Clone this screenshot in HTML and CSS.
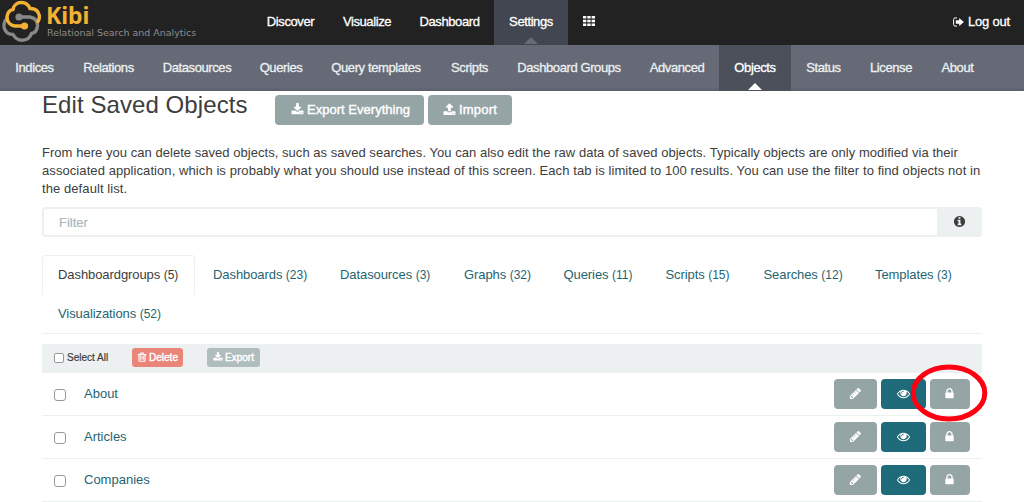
FILE: index.html
```html
<!DOCTYPE html>
<html lang="en">
<head>
<meta charset="utf-8">
<title>Kibi - Settings</title>
<link rel="stylesheet" href="styles.css">
</head>
<body>
<svg class="sprite" aria-hidden="true">
  <symbol id="download" viewBox="0 0 1792 1792"><path d="M1344 1344q0-26-19-45t-45-19-45 19-19 45 19 45 45 19 45-19 19-45zm256 0q0-26-19-45t-45-19-45 19-19 45 19 45 45 19 45-19 19-45zm128-224v320q0 40-28 68t-68 28h-1472q-40 0-68-28t-28-68v-320q0-40 28-68t68-28h465l135 136q58 56 136 56t136-56l136-136h464q40 0 68 28t28 68zm-325-569q17 41-14 70l-448 448q-18 19-45 19t-45-19l-448-448q-31-29-14-70 17-39 59-39h256v-448q0-26 19-45t45-19h256q26 0 45 19t19 45v448h256q42 0 59 39z"/></symbol>
  <symbol id="upload" viewBox="0 0 1792 1792"><path d="M1344 1472q0-26-19-45t-45-19-45 19-19 45 19 45 45 19 45-19 19-45zm256 0q0-26-19-45t-45-19-45 19-19 45 19 45 45 19 45-19 19-45zm128-224v320q0 40-28 68t-68 28h-1472q-40 0-68-28t-28-68v-320q0-40 28-68t68-28h427q21 56 70.5 92t110.5 36h256q61 0 110.5-36t70.5-92h427q40 0 68 28t28 68zm-325-648q-17 40-59 40h-256v448q0 26-19 45t-45 19h-256q-26 0-45-19t-19-45v-448h-256q-42 0-59-40-17-39 14-69l448-448q18-19 45-19t45 19l448 448q31 30 14 69z"/></symbol>
  <symbol id="lock" viewBox="0 0 1792 1792"><path d="M640 768h512v-192q0-106-75-181t-181-75-181 75-75 181v192zm832 96v576q0 40-28 68t-68 28h-960q-40 0-68-28t-28-68v-576q0-40 28-68t68-28h32v-192q0-184 132-316t316-132 316 132 132 316v192h32q40 0 68 28t28 68z"/></symbol>
  <symbol id="pencil" viewBox="0 0 1792 1792"><path d="M491 1536l91-91-235-235-91 91v107h128v128h107zm523-928q0-22-22-22-10 0-17 7l-542 542q-7 7-7 17 0 22 22 22 10 0 17-7l542-542q7-7 7-17zm-54-192l416 416-832 832h-416v-416zm683 96q0 53-37 90l-166 166-416-416 166-165q36-38 90-38 53 0 91 38l235 234q37 39 37 91z"/></symbol>
  <symbol id="eye" viewBox="0 0 1792 1792"><path d="M1664 960q-152-236-381-353 61 104 61 225 0 185-131.5 316.5t-316.5 131.5-316.5-131.5-131.5-316.5q0-121 61-225-229 117-381 353 133 205 333.5 326.5t434.5 121.5 434.5-121.5 333.500-326.500zm-720-384q0-20-14-34t-34-14q-125 0-214.500 89.500t-89.500 214.500q0 20 14 34t34 14 34-14 14-34q0-86 61-147t147-61q20 0 34-14t14-34zm848 384q0 34-20 69-140 230-376.500 368.500t-499.500 138.500-499.500-139-376.500-368q-20-35-20-69t20-69q140-229 376.500-368t499.500-139 499.500 139 376.500 368q20 35 20 69z"/></symbol>
  <symbol id="info" viewBox="0 0 1792 1792"><path d="M1152 1376v-160q0-14-9-23t-23-9h-96v-512q0-14-9-23t-23-9h-320q-14 0-23 9t-9 23v160q0 14 9 23t23 9h96v320h-96q-14 0-23 9t-9 23v160q0 14 9 23t23 9h448q14 0 23-9t9-23zm-128-896v-160q0-14-9-23t-23-9h-192q-14 0-23 9t-9 23v160q0 14 9 23t23 9h192q14 0 23-9t9-23zm640 416q0 209-103 385.5t-279.5 279.5-385.5 103-385.5-103-279.5-279.5-103-385.5 103-385.5 279.5-279.5 385.5-103 385.5 103 279.5 279.5 103 385.5z"/></symbol>
  <symbol id="trash" viewBox="0 0 14 14"><path fill-rule="evenodd" d="M4.600 .8h4.800l.8 1.900H13v1.700h-1V12q0 1.700-1.500 1.700h-7Q2 13.700 2 12V4.400H1V2.700h2.800zM5.800 2l-.3.700h3l-.3-.7zM3.600 4.600v7.500h6.800V4.600zM4.500 5.500h1.200v5.500H4.500zM6.400 5.500h1.200v5.500H6.400zM8.300 5.500h1.200v5.500H8.300z"/></symbol>
  <symbol id="signout" viewBox="0 0 11 10"><path d="M4 .9H2.200Q.6.900.6 2.500v5Q.6 9.100 2.200 9.100H4" fill="none" stroke="currentColor"/><path d="M2.800 3.300h3.400V.9L10.900 5 6.200 9.100V6.700H2.800z"/></symbol>
  <symbol id="grid" viewBox="0 0 12 10"><path d="M0 0h3.300v2.600H0zM4.300 0h3.300v2.600H4.300zM8.600 0H12v2.600H8.600zM0 3.700h3.300v2.600H0zM4.300 3.700h3.300v2.600H4.300zM8.600 3.700H12v2.600H8.600zM0 7.400h3.300V10H0zM4.300 7.400h3.300V10H4.300zM8.600 7.400H12V10H8.600z"/></symbol>
</svg>

<header class="topbar">
  <div class="brand">
    <svg class="logo" viewBox="0 0 40 43" fill="none" stroke-width="3.400" stroke-linecap="round">
      <path stroke="#888" d="M18 17H29C34 18 37 21 36.500 26C36 30 34 33 30.500 33.500C29 38 26 40.200 21 40.200C17 40.200 14 38 12 34.500C7.500 34.500 4 32 3 27C2.700 23 3.600 20.500 6 18.500"/>
      <path stroke="#f2b233" d="M23 26H14C9 25.500 6 22 6 17C6.500 13 8.500 10 12 9.500C12.500 5.500 16 2.500 20.500 2.500C25 2.500 27.500 5 29 8.500C34 8.500 37.500 11 38.300 15.500C38.500 18 38 20 37 21.500"/>
      <circle cx="18" cy="17" r="3.600" fill="#888" stroke="none"/>
      <circle cx="23.500" cy="26" r="3.600" fill="#f2b233" stroke="none"/>
    </svg>
    <div class="brand-text"><div class="brand-name">Kibi</div><div class="brand-tag">Relational Search and Analytics</div></div>
  </div>
  <nav class="mainnav">
    <a>Discover</a><a>Visualize</a><a>Dashboard</a><a class="current">Settings</a><a><svg class="icon-grid"><use href="#grid"/></svg></a>
  </nav>
  <a class="logout"><svg class="icon-out"><use href="#signout"/></svg>Log out</a>
</header>

<nav class="subnav">
  <a>Indices</a><a>Relations</a><a>Datasources</a><a>Queries</a><a>Query templates</a><a>Scripts</a><a>Dashboard Groups</a><a>Advanced</a><a class="current">Objects</a><a>Status</a><a>License</a><a>About</a>
</nav>

<main class="content">
  <div class="heading">
    <h1>Edit Saved Objects</h1>
    <button class="btn btn-everything"><svg class="icon"><use href="#download"/></svg>Export Everything</button>
    <button class="btn btn-import"><svg class="icon"><use href="#upload"/></svg>Import</button>
  </div>
  <p class="intro"><span class="l1">From here you can delete saved objects, such as saved searches. You can also edit the raw data of saved objects. Typically objects are only modified via their</span><br><span class="l2">associated application, which is probably what you should use instead of this screen. Each tab is limited to 100 results. You can use the filter to find objects not in</span><br><span class="l2">the default list.</span></p>
  <div class="filter"><div class="filter-input">Filter</div><div class="filter-info"><svg class="icon-info"><use href="#info"/></svg></div></div>

  <ul class="tabs">
    <li class="active">Dashboardgroups <small>(5)</small></li>
    <li>Dashboards <small>(23)</small></li>
    <li>Datasources <small>(3)</small></li>
    <li>Graphs <small>(32)</small></li>
    <li>Queries <small>(11)</small></li>
    <li>Scripts <small>(15)</small></li>
    <li>Searches <small>(12)</small></li>
    <li>Templates <small>(3)</small></li>
    <li>Visualizations <small>(52)</small></li>
  </ul>

  <div class="bulk">
    <span class="check check-sm"></span><span class="select-all">Select All</span>
    <button class="btn-xs danger"><svg class="icon-xs"><use href="#trash"/></svg>Delete</button>
    <button class="btn-xs"><svg class="icon-xs"><use href="#download"/></svg>Export</button>
  </div>
  <div class="row"><span class="check"></span><a>About</a>
    <div class="actions"><button class="btn edit"><svg class="icon"><use href="#pencil"/></svg></button><button class="btn view"><svg class="icon"><use href="#eye"/></svg></button><span class="marked"><button class="btn lock"><svg class="icon"><use href="#lock"/></svg></button><svg class="ring" viewBox="0 0 78 58"><ellipse cx="39" cy="29" rx="35.800" ry="26" fill="none" stroke="#ff0013" stroke-width="5"/></svg></span></div>
  </div>
  <div class="row"><span class="check"></span><a>Articles</a>
    <div class="actions"><button class="btn edit"><svg class="icon"><use href="#pencil"/></svg></button><button class="btn view"><svg class="icon"><use href="#eye"/></svg></button><button class="btn lock"><svg class="icon"><use href="#lock"/></svg></button></div>
  </div>
  <div class="row"><span class="check"></span><a>Companies</a>
    <div class="actions"><button class="btn edit"><svg class="icon"><use href="#pencil"/></svg></button><button class="btn view"><svg class="icon"><use href="#eye"/></svg></button><button class="btn lock"><svg class="icon"><use href="#lock"/></svg></button></div>
  </div>
</main>
</body>
</html>
```

FILE: styles.css
```css
* { box-sizing: border-box; }
body {
  margin: 0;
  height: 502px;
  overflow: hidden;
  background: #fff;
  color: #3d3d3d;
  font: 13px/18px "Liberation Sans", Arial, sans-serif;
}
svg { fill: currentColor; flex: none; }
.sprite { display: none; }

.topbar { display: flex; height: 45px; background: #222; color: #fff; }
.brand { display: flex; width: 252px; }
.logo { width: 40px; height: 43px; margin-left: 1px; fill: none; }
.brand-text { padding: 3px 0 0 5px; white-space: nowrap; }
.brand-name { font: bold 23px/24px "Noto Sans", sans-serif; color: #f2b233; letter-spacing: -.1px; }
.brand-tag { padding-left: 1px; font: 9.5px/11px "DejaVu Sans", sans-serif; color: #8c8c8c; letter-spacing: -.02px; }

.mainnav { display: grid; grid-template-columns: 77px 76px 89px 74px 42px; }
.mainnav a, .subnav a {
  display: flex;
  align-items: center;
  justify-content: center;
  position: relative;
  white-space: nowrap;
  letter-spacing: -.4px;
  -webkit-text-stroke: .3px currentColor;
}
.mainnav a { padding-bottom: 1px; }
.mainnav a:last-child { padding-bottom: 3px; }
.mainnav .current { background: #414650; }
.current::after {
  content: "";
  position: absolute;
  bottom: 1px;
  left: calc(50% - 7px);
  border: 7px solid transparent;
  border-top: 0;
  border-bottom-color: #656a76;
}
.icon-grid { width: 12px; height: 10px; }
.logout {
  display: flex;
  align-items: center;
  gap: 4px;
  margin-left: auto;
  padding: 0 14px 1px 0;
  letter-spacing: -.2px;
  -webkit-text-stroke: .3px currentColor;
}
.icon-out { width: 11px; height: 10px; }

.subnav {
  display: grid;
  grid-template-columns: 69px 79px 98px 70px 120px 67px 132px 84px 72px 65px 70px 63px;
  height: 46px;
  background: linear-gradient(#656a76 92%, #5b5f6a);
  color: #ecf0f1;
}
.subnav .current { background: #4c505b; color: #fff; }
.subnav .current::after { border-bottom-color: #fff; }

.content { margin: 0 42px; }
.heading { display: flex; align-items: flex-start; height: 53px; padding-top: 4px; }
h1 { margin: -3px 0 0; width: 233px; font-size: 24px; line-height: 26px; font-weight: normal; letter-spacing: .08px; white-space: nowrap; }
.btn {
  display: flex;
  align-items: center;
  justify-content: center;
  gap: 3px;
  height: 30px;
  padding: 0;
  border: 0;
  border-radius: 4px;
  background: #95a5a6;
  color: #fff;
  font: inherit;
  -webkit-text-stroke: .4px currentColor;
}
.icon { width: 13px; height: 13px; stroke: none; }
.btn-everything { width: 149px; margin-right: 4px; padding-left: 2px; letter-spacing: .03px; }
.btn-everything .icon, .btn-import .icon { margin-top: -2px; }
.btn-import { width: 84px; letter-spacing: .2px; }

.intro { margin: 0 -10px 8px 0; height: 55px; white-space: nowrap; }
.l1 { letter-spacing: .04px; }
.l2 { letter-spacing: .08px; }

.filter { display: flex; height: 30px; margin-top: 8px; border: 2px solid #ecf0f1; border-radius: 4px; }
.filter-input { flex: 1; padding: 5px 15px 3px; color: #acb6c0; -webkit-text-stroke: .2px currentColor; }
.filter-info { display: flex; align-items: center; justify-content: center; width: 43px; padding: 0 0 2px 2px; background: #ecf0f1; }
.icon-info { width: 13px; height: 13px; }

.tabs {
  display: grid;
  grid-template-columns: 155px 127px 124px 99.5px 102px 98px 111.5px 1fr;
  grid-template-rows: 39px 39px;
  height: 79px;
  margin: 18px 0 10px;
  padding: 0;
  border-bottom: 1px solid #ecf0f1;
  list-style: none;
  color: #1f6471;
}
.tabs li { padding: 11px 0 0 16px; white-space: nowrap; letter-spacing: -.08px; }
.tabs small { font-size: 12px; letter-spacing: 0; }
.tabs .active { width: 153px; padding: 10px 0 0 15px; border: 1px solid #ecf0f1; border-bottom: 0; border-radius: 4px 4px 0 0; color: #3d3d3d; }

.bulk { display: flex; align-items: center; height: 29px; padding: 0 0 2px 12px; background: #ecf0f1; font-size: 10px; }
.check { width: 12px; height: 12px; border: 1px solid #999; border-radius: 3px; background: #fff; }
.check-sm { width: 10px; height: 10px; border-radius: 2px; }
.select-all { width: 65px; margin: 0 0 0 3px; -webkit-text-stroke: .2px currentColor; }
.btn-xs {
  display: flex;
  align-items: center;
  justify-content: center;
  gap: 2px;
  width: 53px;
  height: 19px;
  padding: 0;
  border: 0;
  border-radius: 3px;
  background: #b0bdbd;
  color: #fff;
  font: 10px/12px "Liberation Sans", Arial, sans-serif;
  -webkit-text-stroke: .4px currentColor;
}
.danger { width: 51px; margin-right: 24px; background: #e98579; }
.icon-xs { width: 10px; height: 10px; margin-top: -1px; stroke: none; }

.row { display: flex; align-items: center; height: 43px; padding: 0 12px; border-bottom: 1px solid #ecf0f1; }
.row .check { margin-top: 2px; }
.row a { margin: -1px 0 0 18px; color: #1f6471; }
.row .icon { margin-top: -1px; margin-right: 1px; }
.actions { display: flex; gap: 4px; margin-left: auto; }
.edit { width: 43px; }
.view { width: 45px; background: #1f6b7a; }
.lock { width: 40px; }
.marked { position: relative; }
.ring { position: absolute; left: -20px; top: -15px; width: 78px; height: 58px; }
```
